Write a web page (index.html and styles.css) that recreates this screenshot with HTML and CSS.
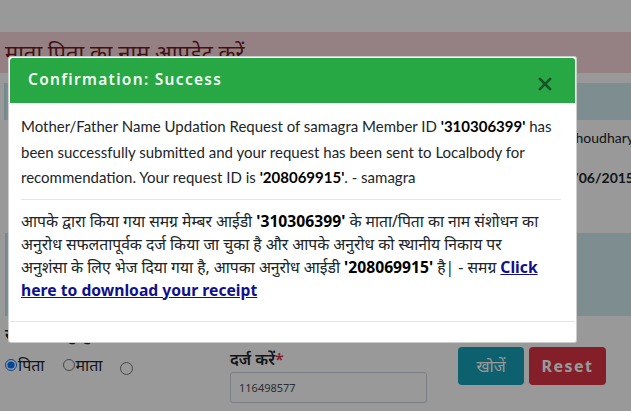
FILE: index.html
```html
<!DOCTYPE html>
<html lang="hi">
<head>
<meta charset="utf-8">
<title>माता पिता का नाम आपडेट करें</title>
<link rel="stylesheet" href="styles.css">
</head>
<body>
<div class="page">
  <div class="topbar"></div>
  <div class="title-band">माता पिता का नाम आपडेट करें</div>
  <div class="info info-top"></div>
  <div class="details">
    <div class="detail-row"><span class="detail-val">Choudhary</span></div>
    <div class="detail-row"><span class="detail-val bold">12/06/2015</span></div>
  </div>
  <div class="info info-mid"></div>
  <div class="form">
    <div class="form-label">संशोधन हेतु चुनें</div>
    <div class="form-row">
      <div class="radios">
        <label class="radio"><input type="radio" name="rel" checked>पिता</label>
        <label class="radio"><input type="radio" name="rel">माता</label>
        <label class="radio radio-empty"><input type="radio" name="rel"></label>
      </div>
      <div class="field">
        <div class="field-label">दर्ज करें<span class="req">*</span></div>
        <div class="input">116498577</div>
      </div>
      <div class="buttons">
        <button class="btn btn-search">खोजें</button>
        <button class="btn btn-reset">Reset</button>
      </div>
    </div>
  </div>
</div>

<div class="backdrop"></div>

<div class="modal">
  <div class="modal-header">
    <span class="modal-title">Confirmation: Success</span>
    <svg class="close" width="14" height="14" viewBox="0 0 14 14"><path d="M2 2 L12 12 M12 2 L2 12" stroke="#15532a" stroke-width="2.6" stroke-linecap="square" fill="none"/></svg>
  </div>
  <div class="modal-body">
    <p class="msg-en">Mother/Father Name Updation Request of samagra Member ID <b>'310306399'</b> has been successfully submitted and your request has been sent to Localbody for recommendation. Your request ID is <b>'208069915'</b>. - samagra</p>
    <hr class="divider">
    <p class="msg-hi">आपके द्वारा किया गया समग्र मेम्बर आईडी <b>'310306399'</b> के माता/पिता का नाम संशोधन का अनुरोध सफलतापूर्वक दर्ज किया जा चुका है और आपके अनुरोध को स्थानीय निकाय पर अनुशंसा के लिए भेज दिया गया है, आपका अनुरोध आईडी <b>'208069915'</b> है| - समग्र <a class="receipt" href="#">Click here to download your receipt</a></p>
  </div>
  <div class="modal-footer"></div>
</div>
</body>
</html>
```
FILE: styles.css
```css
html, body {
  margin: 0;
  padding: 0;
}
body {
  width: 631px;
  height: 411px;
  overflow: hidden;
  background: #ffffff;
  font-family: "Noto Sans", "Noto Sans Devanagari", sans-serif;
  color: #212529;
  position: relative;
}
.page {
  display: flex;
  flex-direction: column;
}
.topbar {
  height: 32px;
  background: #ffffff;
}
.title-band {
  height: 41px;
  background: #f8d7da;
  color: #721c24;
  font-size: 22px;
  line-height: 41px;
  padding-left: 5px;
  white-space: nowrap;
  overflow: hidden;
}
.info {
  background: #d1ecf1;
  border-left: 2px solid #bee5eb;
}
.info-top {
  margin-top: 10px;
  margin-left: 4px;
  height: 37px;
}
.details {
  height: 113px;
  display: flex;
  flex-direction: column;
  align-items: flex-end;
  box-sizing: border-box;
  padding-top: 8px;
  gap: 20px;
  overflow: hidden;
  font-family: "Lato", sans-serif;
}
.detail-row {
  white-space: nowrap;
  font-size: 14px;
  line-height: 20px;
  margin-right: -3px;
}
.bold { font-weight: 700; }
.info-mid {
  margin-left: 5px;
  height: 83px;
}
.form {
  padding: 8px 0 0 5px;
}
.form-label {
  font-size: 16px;
  line-height: 20px;
  font-weight: 600;
  height: 20px;
}
.form-row {
  display: flex;
  align-items: flex-start;
}
.radios {
  display: flex;
  gap: 18px;
  padding-top: 10px;
  width: 225px;
}
.radio {
  display: flex;
  align-items: center;
  font-size: 16px;
  line-height: 20px;
}
.radio input {
  margin: 0 1px 0 0;
  width: 12px;
  height: 12px;
}
.radio-empty input {
  width: 13px;
  height: 13px;
  margin-top: 8px;
}
.field {
  width: 197px;
  padding-top: 4px;
}
.field-label {
  font-size: 16px;
  font-weight: 600;
  line-height: 22px;
  margin-bottom: 2px;
}
.req { color: #dc3545; }
.input {
  height: 31px;
  box-sizing: border-box;
  border: 1px solid #ced4da;
  border-radius: 3px;
  background: #ffffff;
  font-size: 11px;
  line-height: 29px;
  padding-left: 8px;
  color: #495057;
}
.buttons {
  display: flex;
  gap: 5px;
  margin-left: 31px;
  margin-top: 3px;
}
.btn {
  height: 38px;
  border: none;
  border-radius: 4px;
  color: #ffffff;
  font-family: "Noto Sans", sans-serif;
  font-size: 16px;
  padding: 0;
}
.btn-search {
  width: 66px;
  background: #17a2b8;
}
.btn-reset {
  width: 77px;
  background: #dc3545;
  font-weight: 700;
  letter-spacing: 1.5px;
}
.backdrop {
  position: absolute;
  inset: 0;
  background: rgba(0, 0, 0, 0.4);
}
.modal {
  position: absolute;
  left: 8px;
  top: 56px;
  width: 569px;
  height: 287px;
  box-sizing: border-box;
  background: #ffffff;
  border: 1px solid rgba(0, 0, 0, 0.2);
  border-radius: 3px;
  padding: 1px;
  display: flex;
  flex-direction: column;
}
.modal-header {
  height: 45px;
  background: #28a745;
  border-radius: 3px 3px 0 0;
  display: flex;
  align-items: center;
  justify-content: space-between;
  padding: 0 23px 0 18px;
}
.modal-title {
  color: #f4fff4;
  font-size: 15.5px;
  font-weight: 600;
  letter-spacing: 1.3px;
  margin-top: -3px;
}
.close {
  margin-top: 6px;
}
.modal-body {
  padding: 11px 14px 0 11px;
  height: 218px;
  box-sizing: border-box;
}
.msg-en {
  margin: 0;
  font-family: "Lato", "Noto Sans", sans-serif;
  font-size: 15px;
  line-height: 25.5px;
  color: #212529;
}
.msg-en b, .msg-hi b {
  font-weight: 700;
  color: #000;
}
.divider {
  border: 0;
  border-top: 1px solid #e5e5e5;
  margin: 8px 0 10px;
}
.msg-hi {
  margin: 0;
  max-width: 524px;
  font-size: 15.7px;
  line-height: 23px;
  color: #212529;
}
.receipt {
  color: #10108a;
  font-weight: 700;
  text-decoration: underline;
}
.modal-footer {
  border-top: 1px solid #e5e5e5;
  flex: 1;
}
```
